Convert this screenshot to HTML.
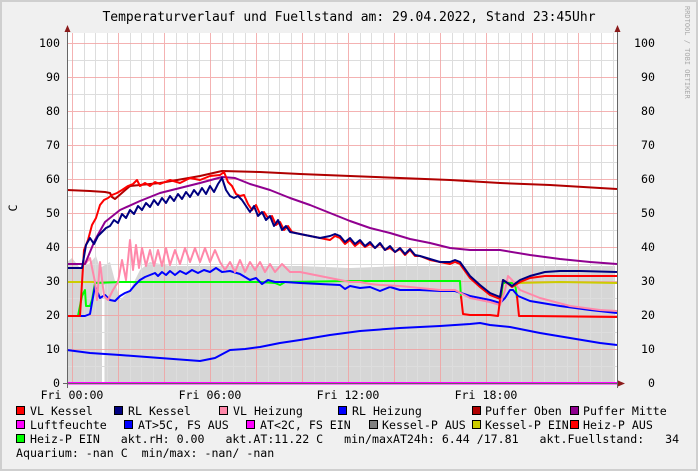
<!DOCTYPE html>
<html><head><meta charset="utf-8"><style>
html,body{margin:0;padding:0;background:#f0f0f0;}
svg{display:block;}
text{font-family:"DejaVu Sans Mono","Liberation Mono",monospace;font-size:11.6px;fill:#000;}
</style></head><body>
<svg width="698" height="471" viewBox="0 0 698 471" xmlns="http://www.w3.org/2000/svg">
<rect x="0" y="0" width="698" height="471" fill="#cfcfcf"/>
<rect x="2" y="2" width="694" height="467" fill="#f0f0f0"/>
<text x="349" y="21" text-anchor="middle" style="font-size:13px">Temperaturverlauf und Fuellstand am: 29.04.2022, Stand 23:45Uhr</text>
<text transform="translate(685,6) rotate(90)" style="font-size:7px;fill:#aaa">RRDTOOL / TOBI OETIKER</text>
<rect x="67" y="33" width="550" height="350" fill="#fff"/>
<path d="M67,383 L67,262 L72,258 L80,268 L90,263 L96,256 L100,268 L110,262 L120,300 L130,290 L140,270 L150,262 L170,266 L200,266 L240,266 L300,266 L350,268 L400,266 L450,266 L500,266 L550,266 L615,266 L615,383 Z" fill="#d6d6d6"/>
<rect x="102" y="285" width="2.5" height="98" fill="#fff"/>
<g stroke="#dddddd" stroke-width="1">
<path d="M67,60.5H617M67,94.5H617M67,128.5H617M67,162.5H617M67,196.5H617M67,230.5H617M67,264.5H617M67,298.5H617M67,332.5H617M67,366.5H617"/>
<path d="M84.5,33V383M95.5,33V383M107.5,33V383M130.5,33V383M141.5,33V383M153.5,33V383M176.5,33V383M187.5,33V383M199.5,33V383M222.5,33V383M233.5,33V383M245.5,33V383M268.5,33V383M279.5,33V383M291.5,33V383M314.5,33V383M325.5,33V383M337.5,33V383M360.5,33V383M371.5,33V383M383.5,33V383M406.5,33V383M417.5,33V383M429.5,33V383M452.5,33V383M463.5,33V383M475.5,33V383M498.5,33V383M509.5,33V383M521.5,33V383M544.5,33V383M555.5,33V383M567.5,33V383M590.5,33V383M601.5,33V383M613.5,33V383"/>
</g>
<g stroke="#f2a0a0" stroke-width="1" opacity="0.8">
<path d="M67,43.5H617M67,77.5H617M67,111.5H617M67,145.5H617M67,179.5H617M67,213.5H617M67,247.5H617M67,281.5H617M67,315.5H617M67,349.5H617"/>
<path d="M72.5,33V383M118.5,33V383M164.5,33V383M210.5,33V383M256.5,33V383M302.5,33V383M348.5,33V383M394.5,33V383M440.5,33V383M486.5,33V383M532.5,33V383M578.5,33V383"/>
</g>
<g fill="none" stroke-width="2" stroke-linejoin="round">
<polyline stroke="#0000ff" points="67,350 90,353 120,355 160,358 200,361 215,358 230,350 245,349 260,347 280,343 300,340 330,335 360,331 400,328 440,326 470,324 480,323 490,325 510,327 540,333 570,338 600,343 617,345"/>
<polyline stroke="#cccc00" points="67,282 95,282"/>
<polyline stroke="#cccc00" points="516,283 560,282 617,283"/>
<polyline stroke="#00ff00" points="78,316 82,296 85,290 86,306 90,306 92,300 95,283 120,282 200,282 260,282 275,283 280,285 285,282 350,281 400,281 460,281 461,298 462,298"/>
<polyline stroke="#00ff00" points="501,298 503,283 515,283 517,298"/>
<polyline stroke="#0000ff" points="67,316 85,316 90,314 95,286 100,298 105,295 110,300 115,301 120,296 125,293 130,291 135,285 140,280 145,277 150,275 155,273 158,276 162,272 166,275 170,271 175,275 180,271 186,274 192,270 198,273 204,270 210,272 216,268 222,272 230,271 240,274 250,280 256,278 262,284 268,280 275,282 285,282 300,283 320,284 340,285 345,289 350,286 360,288 370,287 380,291 390,287 400,290 420,290 440,291 455,291 470,296 490,300 500,303 505,298 510,290 513,290 518,296 530,301 560,306 590,310 617,313"/>
<polyline stroke="#ff88aa" points="67,264 85,264 90,258 95,282 97,300 100,262 104,296 108,300 113,290 118,282 122,260 126,280 130,240 133,270 136,245 139,268 142,248 146,266 150,250 154,266 158,250 162,266 166,248 170,265 175,250 180,264 185,248 190,262 195,248 200,262 205,248 210,262 215,250 220,262 225,270 230,262 235,272 240,260 245,272 250,262 255,270 260,262 265,272 270,264 275,272 282,264 290,272 300,272 320,276 340,280 350,282 360,282 370,284 380,285 400,286 420,288 440,290 455,290 470,298 490,302 500,305 505,290 508,276 512,280 520,290 540,298 570,306 600,310 617,311"/>
<polyline stroke="#b00000" points="67,190 90,191 105,192 110,193 112,197 115,199 130,186 160,183 200,176 222,171 260,172 300,174 350,176 400,178 450,180 500,183 550,185 600,188 617,189"/>
<polyline stroke="#900090" points="67,264 85,264 95,240 105,222 120,210 140,201 160,193 180,188 200,183 222,177 235,178 250,184 270,190 290,198 310,205 330,213 350,221 370,228 390,233 410,239 430,243 450,248 470,250 500,250 530,255 560,259 590,262 617,264"/>
<polyline stroke="#ff0000" points="67,316 80,316 84,250 88,240 92,225 96,218 100,205 104,200 108,198 112,195 117,193 122,190 128,186 133,184 137,180 140,186 145,183 150,186 155,182 160,184 170,180 180,183 190,178 200,180 210,176 220,175 224,172 228,182 232,186 236,194 240,196 244,195 248,204 252,210 256,205 260,214 264,212 268,218 272,216 276,225 280,222 284,230 288,226 292,232 300,234 310,236 320,238 330,240 335,236 340,238 345,244 350,240 355,246 360,242 365,247 370,244 375,248 380,244 385,250 390,248 395,252 400,249 405,255 410,250 415,256 420,256 430,260 440,262 450,264 455,262 460,264 470,278 480,287 490,295 500,299 503,280 506,282 512,287 520,282 530,278 545,276 560,276 580,276 617,276"/>
<polyline stroke="#000080" points="67,268 82,268 86,245 90,238 94,244 98,236 102,232 106,228 110,226 114,220 118,223 122,214 126,218 130,210 134,214 138,206 142,210 146,203 150,207 154,200 158,205 162,198 166,203 170,196 174,201 178,194 182,199 186,192 190,197 194,190 198,195 202,188 206,194 210,186 214,192 218,184 222,178 226,190 230,196 234,198 238,196 242,200 246,206 250,212 254,206 258,216 262,212 266,220 270,216 274,226 278,220 282,230 286,226 290,232 300,234 310,236 320,238 330,236 335,234 340,236 345,242 350,238 355,244 360,240 365,246 370,242 375,248 380,243 385,250 390,246 395,252 400,248 405,254 410,249 415,255 420,256 430,259 440,262 450,262 455,260 460,262 470,276 480,285 490,293 500,297 503,280 506,282 512,286 520,280 530,276 545,272 560,271 580,271 617,272"/>
<polyline stroke="#ff0000" points="461,296 463,314 470,315 490,315 498,316 500,300"/>
<polyline stroke="#ff0000" points="517,296 519,316 530,316 617,317"/>
</g>
<rect x="67" y="382" width="550" height="2.5" fill="#ff00ff"/>
<g stroke="#666" stroke-width="1">
<path d="M67.5,28V388M617.5,28V388M63,383.5H622"/>
</g>
<path d="M67.5,25L64.5,32H70.5Z M617.5,25L614.5,32H620.5Z M625,383.5L618,380.5V386.5Z" fill="#8b1a1a"/>
<g text-anchor="end">
<text x="60" y="47">100</text><text x="60" y="81">90</text><text x="60" y="115">80</text><text x="60" y="149">70</text><text x="60" y="183">60</text><text x="60" y="217">50</text><text x="60" y="251">40</text><text x="60" y="285">30</text><text x="60" y="319">20</text><text x="60" y="353">10</text><text x="60" y="387">0</text>
</g>
<g text-anchor="end">
<text x="655" y="47">100</text><text x="655" y="81">90</text><text x="655" y="115">80</text><text x="655" y="149">70</text><text x="655" y="183">60</text><text x="655" y="217">50</text><text x="655" y="251">40</text><text x="655" y="285">30</text><text x="655" y="319">20</text><text x="655" y="353">10</text><text x="655" y="387">0</text>
</g>
<text transform="translate(17,208) rotate(-90)" text-anchor="middle">C</text>
<g text-anchor="middle">
<text x="72" y="399">Fri 00:00</text><text x="210" y="399">Fri 06:00</text><text x="348" y="399">Fri 12:00</text><text x="486" y="399">Fri 18:00</text>
</g>
<g stroke="#000" stroke-width="1">
<rect x="16.5" y="406.5" width="8" height="8" fill="#ff0000"/>
<rect x="114.5" y="406.5" width="8" height="8" fill="#000080"/>
<rect x="219.5" y="406.5" width="8" height="8" fill="#ff88aa"/>
<rect x="338.5" y="406.5" width="8" height="8" fill="#0000ff"/>
<rect x="472.5" y="406.5" width="8" height="8" fill="#b00000"/>
<rect x="570.5" y="406.5" width="8" height="8" fill="#900090"/>
<rect x="16.5" y="420.5" width="8" height="8" fill="#ff00ff"/>
<rect x="124.5" y="420.5" width="8" height="8" fill="#0000ff"/>
<rect x="246.5" y="420.5" width="8" height="8" fill="#ff00ff"/>
<rect x="369.5" y="420.5" width="8" height="8" fill="#808080"/>
<rect x="472.5" y="420.5" width="8" height="8" fill="#cccc00"/>
<rect x="570.5" y="420.5" width="8" height="8" fill="#ff0000"/>
<rect x="16.5" y="434.5" width="8" height="8" fill="#00ff00"/>
</g>
<text x="30" y="415">VL Kessel</text>
<text x="128" y="415">RL Kessel</text>
<text x="233" y="415">VL Heizung</text>
<text x="352" y="415">RL Heizung</text>
<text x="485" y="415">Puffer Oben</text>
<text x="583" y="415">Puffer Mitte</text>
<text x="30" y="429">Luftfeuchte</text>
<text x="138" y="429">AT&gt;5C, FS AUS</text>
<text x="260" y="429">AT&lt;2C, FS EIN</text>
<text x="382" y="429">Kessel-P AUS</text>
<text x="485" y="429">Kessel-P EIN</text>
<text x="583" y="429">Heiz-P AUS</text>
<text x="30" y="443" xml:space="preserve">Heiz-P EIN   akt.rH: 0.00   akt.AT:11.22 C   min/maxAT24h: 6.44 /17.81   akt.Fuellstand:   34</text>
<text x="16" y="457" xml:space="preserve">Aquarium: -nan C  min/max: -nan/ -nan</text>
</svg>
</body></html>
